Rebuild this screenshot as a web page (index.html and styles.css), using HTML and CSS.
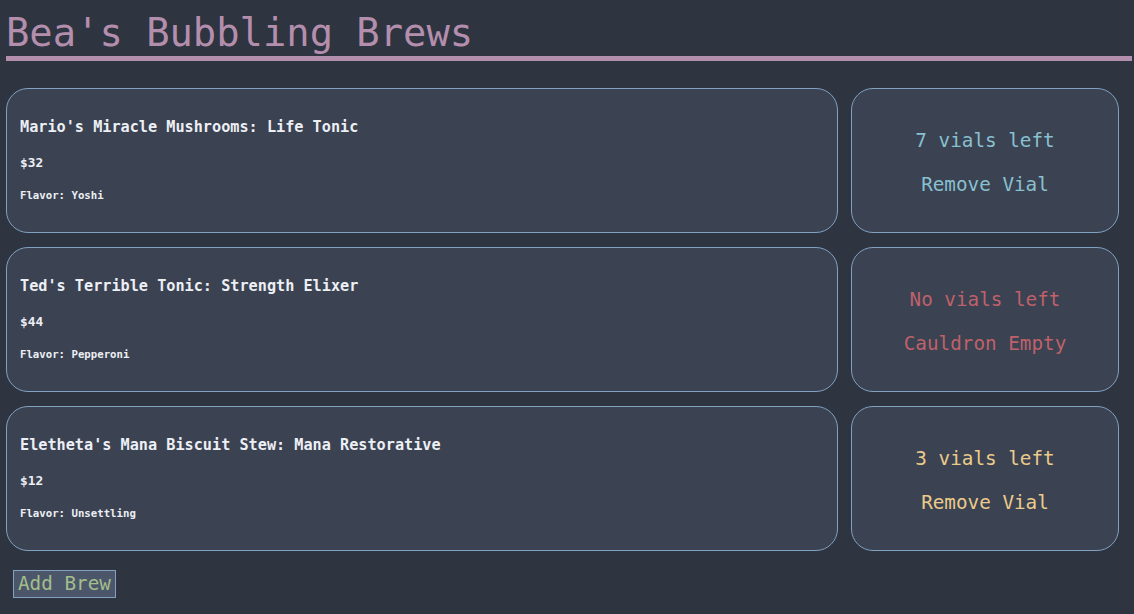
FILE: index.html
```html
<!DOCTYPE html>
<html lang="en">
<head>
<meta charset="utf-8">
<title>Bea's Bubbling Brews</title>
<link rel="stylesheet" href="styles.css">
</head>
<body>
<h1 class="page-title">Bea's Bubbling Brews</h1>
<main class="brew-list">
  <section class="brew-card">
    <h3 class="brew-name">Mario's Miracle Mushrooms: Life Tonic</h3>
    <p class="brew-price">$32</p>
    <p class="brew-flavor">Flavor: Yoshi</p>
  </section>
  <section class="stock-card stock-ok">
    <p class="stock-count">7 vials left</p>
    <p class="stock-action">Remove Vial</p>
  </section>

  <section class="brew-card">
    <h3 class="brew-name">Ted's Terrible Tonic: Strength Elixer</h3>
    <p class="brew-price">$44</p>
    <p class="brew-flavor">Flavor: Pepperoni</p>
  </section>
  <section class="stock-card stock-empty">
    <p class="stock-count">No vials left</p>
    <p class="stock-action">Cauldron Empty</p>
  </section>

  <section class="brew-card">
    <h3 class="brew-name">Eletheta's Mana Biscuit Stew: Mana Restorative</h3>
    <p class="brew-price">$12</p>
    <p class="brew-flavor">Flavor: Unsettling</p>
  </section>
  <section class="stock-card stock-low">
    <p class="stock-count">3 vials left</p>
    <p class="stock-action">Remove Vial</p>
  </section>
</main>
<div class="actions">
  <button class="add-btn" type="button">Add Brew</button>
</div>
</body>
</html>
```

FILE: styles.css
```css
html, body {
  margin: 0;
  padding: 0;
  background: #2e3440;
}

body {
  font-family: "DejaVu Sans Mono", "Liberation Mono", monospace;
  color: #eceff4;
}

.page-title {
  margin: 10px 2px 0 6px;
  font-size: 38.8px;
  line-height: 46px;
  font-weight: normal;
  color: #b48ead;
  border-bottom: 5px solid #b48ead;
}

.brew-list {
  margin: 27px 15px 0 6px;
  display: grid;
  grid-template-columns: 1fr 268px;
  grid-auto-rows: 145px;
  column-gap: 13px;
  row-gap: 14px;
}

.brew-card,
.stock-card {
  box-sizing: border-box;
  background: #3b4252;
  border: 1px solid #81a1c1;
  border-radius: 22px;
  display: flex;
  flex-direction: column;
  justify-content: center;
}

.brew-card {
  padding: 2px 13px 0 13px;
}

.brew-card p,
.brew-card h3,
.stock-card p {
  margin: 0;
}

.brew-name {
  font-size: 15.2px;
  line-height: 20px;
  font-weight: bold;
}

.brew-price {
  margin-top: 16px !important;
  font-size: 12.8px;
  line-height: 20px;
  font-weight: bold;
}

.brew-flavor {
  margin-top: 13px !important;
  font-size: 10.7px;
  line-height: 20px;
  font-weight: bold;
}

.stock-card {
  align-items: center;
  padding-top: 4px;
}

.stock-card p {
  font-size: 19.3px;
  line-height: 44px;
}

.stock-ok { color: #88c0d0; }
.stock-empty { color: #bf616a; }
.stock-low { color: #ebcb8b; }

.actions {
  margin: 19px 0 0 13px;
}

.add-btn {
  font-family: "DejaVu Sans Mono", "Liberation Mono", monospace;
  font-size: 19.3px;
  line-height: 26px;
  padding: 0 4px 0 4px;
  margin: 0;
  color: #a3be8c;
  background: #4c566a;
  border: 1px solid #81a1c1;
  border-radius: 0;
}
```
